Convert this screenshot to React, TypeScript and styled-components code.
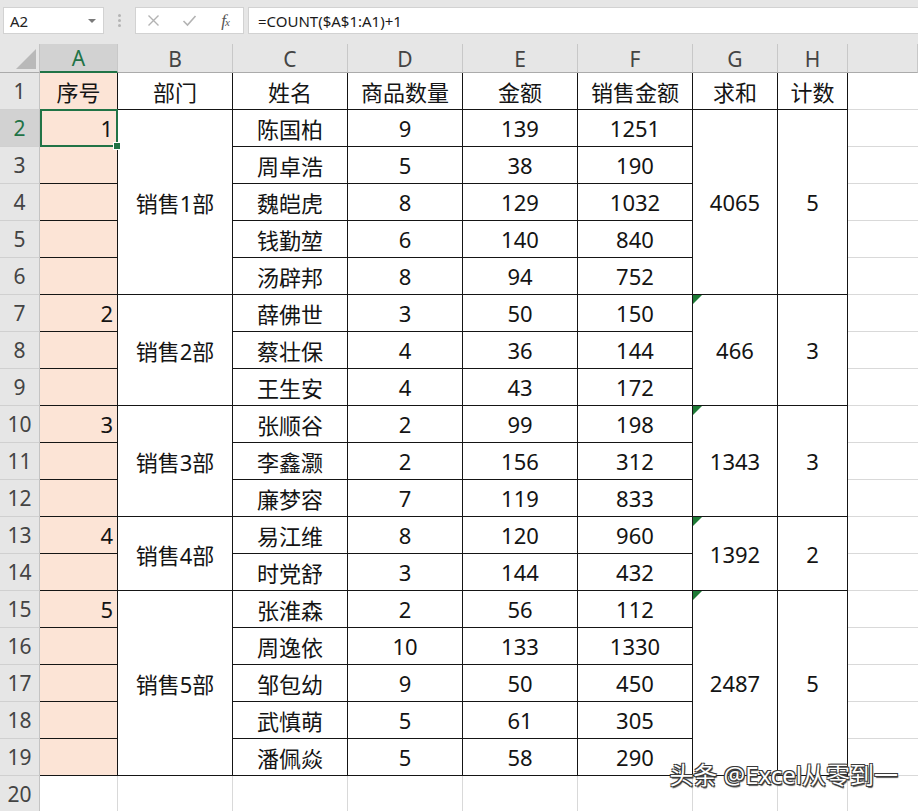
import React from 'react';
import styled, { createGlobalStyle } from 'styled-components';

const GlobalStyle = createGlobalStyle`
  html, body { margin: 0; padding: 0; background: #fff; overflow: hidden; }
  body { font-family: "Noto Sans", "Noto Sans CJK SC", sans-serif; }
  #root { width: 918px; height: 811px; }
`;

const Page = styled.div`
  position: relative;
  width: 918px;
  height: 811px;
  overflow: hidden;
  display: flex;
  flex-direction: column;
  background: #fff;
`;

const FormulaBar = styled.div`
  flex: none;
  height: 44px;
  box-sizing: border-box;
  padding: 7px 0 0 3px;
  background: #e6e6e6;
  display: flex;
  align-items: flex-start;
`;

const NameBox = styled.div`
  width: 101px;
  height: 27px;
  box-sizing: border-box;
  background: #fff;
  border: 1px solid #d2d2d2;
  display: flex;
  align-items: center;
  justify-content: space-between;
  padding: 0 7px 0 6px;
  font-size: 15px;
  color: #222;
`;

const Caret = styled.span`
  width: 0;
  height: 0;
  border-left: 4px solid transparent;
  border-right: 4px solid transparent;
  border-top: 4px solid #7a7a7a;
`;

const Grip = styled.div`
  width: 31px;
  height: 27px;
  display: flex;
  flex-direction: column;
  align-items: center;
  justify-content: center;
  gap: 2px;
`;

const GripDot = styled.span`
  width: 3px;
  height: 3px;
  border-radius: 50%;
  background: #b4b4b4;
`;

const ButtonBox = styled.div`
  width: 109px;
  height: 27px;
  box-sizing: border-box;
  background: #fff;
  border: 1px solid #d2d2d2;
  display: flex;
  align-items: center;
`;

const ButtonSlot = styled.div`
  width: 36px;
  height: 25px;
  display: flex;
  align-items: center;
  justify-content: center;
`;

const Fx = styled.span`
  font-family: "Liberation Serif", serif;
  font-style: italic;
  font-size: 17px;
  color: #555;
  letter-spacing: -1px;
`;

const FxSub = styled.span`
  font-size: 11px;
`;

const FormulaInput = styled.div`
  flex: 1;
  margin-left: 4px;
  height: 27px;
  box-sizing: border-box;
  background: #fff;
  border: 1px solid #d2d2d2;
  border-right: none;
  padding-left: 9px;
  display: flex;
  align-items: center;
  font-size: 15px;
  color: #1a1a1a;
`;

const Sheet = styled.div`
  display: grid;
  grid-template-columns: 40px 78px 115px 115px 115px 115px 115px 85px 70px 1fr;
  grid-template-rows: 29px repeat(20, 37px);
`;

const Corner = styled.div`
  grid-row: 1;
  grid-column: 1;
  box-sizing: border-box;
  background: #e6e6e6;
  border-right: 1px solid #c4c4c4;
  border-bottom: 1px solid #ababab;
  display: flex;
  align-items: flex-end;
  justify-content: flex-end;
  padding: 0 3px 3px 0;
`;

const CornerTriangle = styled.span`
  width: 0;
  height: 0;
  border-left: 20px solid transparent;
  border-bottom: 20px solid #b9b9b9;
`;

const ColHeader = styled.div<{ $col: number; $active?: boolean }>`
  grid-row: 1;
  grid-column: ${(p) => p.$col};
  box-sizing: border-box;
  background: ${(p) => (p.$active ? '#d2d2d2' : '#e6e6e6')};
  border-right: 1px solid #c8c8c8;
  border-bottom: ${(p) => (p.$active ? '2px solid #217346' : '1px solid #ababab')};
  display: flex;
  align-items: center;
  justify-content: center;
  font-size: 21px;
  color: ${(p) => (p.$active ? '#217346' : '#444')};
  padding-top: 1px;
`;

const RowHeader = styled.div<{ $row: number; $active?: boolean }>`
  grid-row: ${(p) => p.$row + 1};
  grid-column: 1;
  box-sizing: border-box;
  background: ${(p) => (p.$active ? '#d2d2d2' : '#e6e6e6')};
  border-right: 1px solid #c4c4c4;
  border-bottom: 1px solid #d0d0d0;
  display: flex;
  align-items: center;
  justify-content: center;
  font-size: 21px;
  color: ${(p) => (p.$active ? '#217346' : '#444')};
`;

const Cell = styled.div<{
  $row: number;
  $col: number;
  $span?: number;
  $peach?: boolean;
  $right?: boolean;
}>`
  position: relative;
  grid-row: ${(p) => p.$row + 1} / span ${(p) => p.$span ?? 1};
  grid-column: ${(p) => p.$col};
  box-sizing: border-box;
  border-right: 1px solid #151515;
  border-bottom: 1px solid #151515;
  background: ${(p) => (p.$peach ? '#fce4d6' : '#fff')};
  display: flex;
  align-items: center;
  justify-content: ${(p) => (p.$right ? 'flex-end' : 'center')};
  padding: 0 4px;
  font-size: 22px;
  color: #141414;
  white-space: nowrap;
`;

const EmptyCell = styled.div<{ $row: number; $col: number; $noRight?: boolean }>`
  grid-row: ${(p) => p.$row + 1};
  grid-column: ${(p) => p.$col};
  box-sizing: border-box;
  border-right: ${(p) => (p.$noRight ? 'none' : '1px solid #d9d9d9')};
  border-bottom: 1px solid #d9d9d9;
  background: #fff;
`;

const Selection = styled.div`
  position: absolute;
  top: -1px;
  left: 0;
  right: -1px;
  bottom: -1px;
  border: 2px solid #217346;
  z-index: 2;
  pointer-events: none;
`;

const FillHandle = styled.span`
  position: absolute;
  right: -5px;
  bottom: -5px;
  width: 6px;
  height: 6px;
  background: #217346;
  border: 1px solid #fff;
`;

const ErrorMark = styled.span`
  position: absolute;
  top: 0;
  left: 0;
  width: 0;
  height: 0;
  border-top: 9px solid #1d7a35;
  border-right: 9px solid transparent;
`;

const Watermark = styled.div`
  position: absolute;
  right: 20px;
  bottom: 20px;
  z-index: 5;
  font-size: 24px;
  color: #fff;
  white-space: nowrap;
  text-shadow: -1px -1px 0 #3a3a3a, 1px -1px 0 #3a3a3a, -1px 1px 0 #3a3a3a,
    1px 1px 0 #3a3a3a, 1px 2px 1px #555;
`;

type Group = {
  idx: string;
  dept: string;
  sum: string;
  count: string;
  mark: boolean;
  rows: string[][];
};

const groups: Group[] = [
  {
    idx: '1',
    dept: '销售1部',
    sum: '4065',
    count: '5',
    mark: false,
    rows: [
      ['陈国柏', '9', '139', '1251'],
      ['周卓浩', '5', '38', '190'],
      ['魏皑虎', '8', '129', '1032'],
      ['钱勤堃', '6', '140', '840'],
      ['汤辟邦', '8', '94', '752'],
    ],
  },
  {
    idx: '2',
    dept: '销售2部',
    sum: '466',
    count: '3',
    mark: true,
    rows: [
      ['薛佛世', '3', '50', '150'],
      ['蔡壮保', '4', '36', '144'],
      ['王生安', '4', '43', '172'],
    ],
  },
  {
    idx: '3',
    dept: '销售3部',
    sum: '1343',
    count: '3',
    mark: true,
    rows: [
      ['张顺谷', '2', '99', '198'],
      ['李鑫灏', '2', '156', '312'],
      ['廉梦容', '7', '119', '833'],
    ],
  },
  {
    idx: '4',
    dept: '销售4部',
    sum: '1392',
    count: '2',
    mark: true,
    rows: [
      ['易江维', '8', '120', '960'],
      ['时党舒', '3', '144', '432'],
    ],
  },
  {
    idx: '5',
    dept: '销售5部',
    sum: '2487',
    count: '5',
    mark: true,
    rows: [
      ['张淮森', '2', '56', '112'],
      ['周逸依', '10', '133', '1330'],
      ['邹包幼', '9', '50', '450'],
      ['武慎萌', '5', '61', '305'],
      ['潘佩焱', '5', '58', '290'],
    ],
  },
];

const headers = ['序号', '部门', '姓名', '商品数量', '金额', '销售金额', '求和', '计数'];
const letters = ['A', 'B', 'C', 'D', 'E', 'F', 'G', 'H'];

function CloseIcon() {
  return (
    <svg width="13" height="13" viewBox="0 0 13 13">
      <path d="M1.5 1.5 L11.5 11.5 M11.5 1.5 L1.5 11.5" stroke="#b3b3b3" strokeWidth="1.4" fill="none" />
    </svg>
  );
}

function CheckIcon() {
  return (
    <svg width="15" height="13" viewBox="0 0 15 13">
      <path d="M1.5 7 L5.5 11 L13.5 2" stroke="#b3b3b3" strokeWidth="1.6" fill="none" />
    </svg>
  );
}

export default function App() {
  const cells: React.ReactNode[] = [];
  let row = 2;
  groups.forEach((g, gi) => {
    const start = row;
    const n = g.rows.length;
    g.rows.forEach((r, i) => {
      const rr = start + i;
      const isSel = rr === 2;
      cells.push(
        <Cell key={`a${rr}`} $row={rr} $col={2} $peach $right>
          {i === 0 ? g.idx : ''}
          {isSel && (
            <Selection>
              <FillHandle />
            </Selection>
          )}
        </Cell>
      );
      r.forEach((v, ci) => {
        cells.push(
          <Cell key={`c${rr}-${ci}`} $row={rr} $col={4 + ci}>
            {v}
          </Cell>
        );
      });
    });
    cells.push(
      <Cell key={`b${gi}`} $row={start} $col={3} $span={n}>
        {g.dept}
      </Cell>
    );
    cells.push(
      <Cell key={`g${gi}`} $row={start} $col={8} $span={n}>
        {g.mark && <ErrorMark />}
        {g.sum}
      </Cell>
    );
    cells.push(
      <Cell key={`h${gi}`} $row={start} $col={9} $span={n}>
        {g.count}
      </Cell>
    );
    row += n;
  });

  const rowHeaders = Array.from({ length: 20 }, (_, i) => i + 1);

  return (
    <Page>
      <GlobalStyle />
      <FormulaBar>
        <NameBox>
          <span>A2</span>
          <Caret />
        </NameBox>
        <Grip>
          <GripDot />
          <GripDot />
          <GripDot />
        </Grip>
        <ButtonBox>
          <ButtonSlot>
            <CloseIcon />
          </ButtonSlot>
          <ButtonSlot>
            <CheckIcon />
          </ButtonSlot>
          <ButtonSlot>
            <Fx>
              f<FxSub>x</FxSub>
            </Fx>
          </ButtonSlot>
        </ButtonBox>
        <FormulaInput>=COUNT($A$1:A1)+1</FormulaInput>
      </FormulaBar>
      <Sheet>
        <Corner>
          <CornerTriangle />
        </Corner>
        {letters.map((l, i) => (
          <ColHeader key={l} $col={i + 2} $active={i === 0}>
            {l}
          </ColHeader>
        ))}
        <ColHeader $col={10} />
        {rowHeaders.map((r) => (
          <RowHeader key={`rh${r}`} $row={r} $active={r === 2}>
            {r}
          </RowHeader>
        ))}
        {headers.map((h, i) => (
          <Cell key={`h1-${i}`} $row={1} $col={i + 2} $peach={i === 0}>
            {h}
          </Cell>
        ))}
        {cells}
        {rowHeaders
          .filter((r) => r < 20)
          .map((r) => (
            <EmptyCell key={`ei${r}`} $row={r} $col={10} $noRight />
          ))}
        {Array.from({ length: 9 }, (_, i) => (
          <EmptyCell key={`e20-${i}`} $row={20} $col={i + 2} $noRight={i === 8} />
        ))}
      </Sheet>
      <Watermark>头条 @Excel从零到一</Watermark>
    </Page>
  );
}
